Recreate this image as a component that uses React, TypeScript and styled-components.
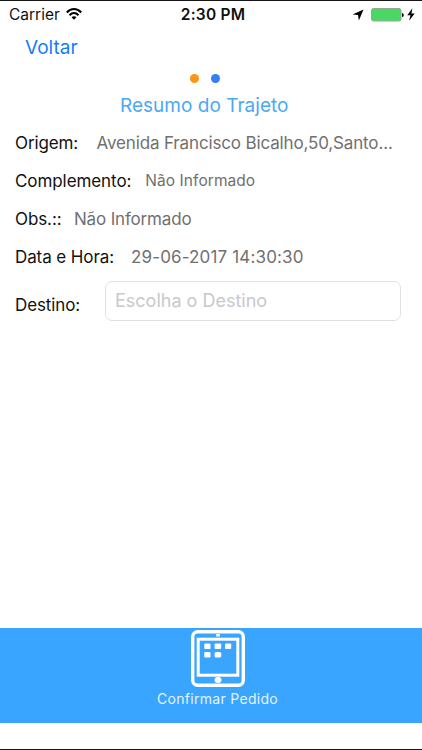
import React from "react";
import styled, { createGlobalStyle } from "styled-components";

const GlobalStyle = createGlobalStyle`
  * { box-sizing: border-box; }
  body { margin: 0; background: #fff; font-family: Inter, "Liberation Sans", sans-serif; }
`;

const Screen = styled.main`
  width: 422px;
  height: 750px;
  display: flex;
  flex-direction: column;
  overflow: hidden;
  background: #fff;
  border-top: 1px solid #151515;
  border-bottom: 1px solid #151515;
`;

const StatusBar = styled.header`
  height: 27px;
  flex: none;
  display: grid;
  grid-template-columns: 1fr auto 1fr;
  align-items: center;
  padding: 0 7px 0 9px;
  color: #111;
`;

const StatusGroup = styled.div<{ $end?: boolean }>`
  display: flex;
  align-items: center;
  justify-content: ${(p) => (p.$end ? "flex-end" : "flex-start")};
`;

const Text = styled.span<{ $size: number; $spacing?: number; $weight?: number; $color?: string }>`
  font-size: ${(p) => p.$size}px;
  letter-spacing: ${(p) => p.$spacing ?? 0}px;
  font-weight: ${(p) => p.$weight ?? 400};
  color: ${(p) => p.$color ?? "#111"};
  line-height: 24px;
  white-space: nowrap;
`;

const Clock = styled(Text)`
  padding-left: 2px;
`;

const WifiIcon = styled.svg`
  margin: 0 0 2px 6px;
`;

const BatteryIcon = styled.svg`
  margin: 0 3px 0 7px;
`;

const NavBar = styled.nav`
  height: 40px;
  flex: none;
  padding: 8px 0 0 25px;
`;

const BackButton = styled.button`
  border: 0;
  padding: 0;
  background: none;
  font-family: inherit;
  display: block;
`;

const PageDots = styled.div`
  height: 20px;
  flex: none;
  display: flex;
  justify-content: center;
  align-items: center;
  gap: 12px;
  padding-right: 12px;
`;

const Dot = styled.i<{ $color: string }>`
  width: 9px;
  height: 9px;
  border-radius: 50%;
  background: ${(p) => p.$color};
`;

const Title = styled.h1`
  margin: 6px 0 0;
  padding-left: 120px;
  height: 30px;
  flex: none;
  font: inherit;
  line-height: 24px;
`;

const Details = styled.section`
  flex: 1;
`;

const Row = styled.div<{ $gap: number }>`
  height: 38px;
  padding-left: 15px;
  display: flex;
  align-items: center;
  gap: ${(p) => p.$gap}px;
`;

const DestinationRow = styled.label`
  height: 52px;
  padding: 5px 21px 0 15px;
  display: flex;
  align-items: flex-start;
  justify-content: space-between;
`;

const DestinationLabel = styled.span`
  padding-top: 12px;
  display: flex;
`;

const DestinationInput = styled.input`
  width: 296px;
  height: 40px;
  border: 1px solid #e1e1e3;
  border-radius: 7px;
  padding: 0 9px 2px;
  outline: none;
  font-family: inherit;
  font-size: 18px;
  letter-spacing: 0;
  &::placeholder { color: #c8c8cd; opacity: 1; }
`;

const ConfirmButton = styled.button`
  height: 95px;
  flex: none;
  border: 0;
  padding: 2px 0 0 13px;
  margin-bottom: 26px;
  background: #3aa5ff;
  font-family: inherit;
  display: flex;
  flex-direction: column;
  align-items: center;
`;

const rows = [
  { label: "Origem:", value: "Avenida Francisco Bicalho,50,Santo...", gap: 18.5, size: 17, ls: -0.12, vs: -0.15 },
  { label: "Complemento:", value: "Não Informado", gap: 14, size: 15.5, ls: -0.08, vs: 0.06 },
  { label: "Obs.::", value: "Não Informado", gap: 12.5, size: 17, ls: -0.1, vs: -0.17 },
  { label: "Data e Hora:", value: "29-06-2017 14:30:30", gap: 17, size: 17, ls: -0.1, vs: 0.15 },
];

export default function App() {
  return (
    <>
      <GlobalStyle />
      <Screen>
        <StatusBar>
          <StatusGroup>
            <Text $size={15.5}>Carrier</Text>
            <WifiIcon width="16" height="12" viewBox="0 0 16 12" fill="none" stroke="#000" strokeWidth="2">
              <path d="M.8 4.5C5-.1 11-.1 15.2 4.5M3.5 7.2c2.7-2.8 6.3-2.8 9 0" />
              <path d="M8 11.8 5.5 9.2c1.5-1.3 3.5-1.3 5 0Z" fill="#000" stroke="none" />
            </WifiIcon>
          </StatusGroup>
          <Clock $size={15.5} $weight={600} $spacing={0.2}>2:30 PM</Clock>
          <StatusGroup $end>
            <svg width="12" height="12" viewBox="0 0 12 12">
              <path d="M11.5.5 6.9 11.5 6 6.1 .5 5.5Z" />
            </svg>
            <BatteryIcon width="33" height="14" viewBox="0 0 33 14">
              <rect x=".5" y=".5" width="29.5" height="12.5" rx="2" fill="#4bd763" stroke="#92a996" />
              <path d="M31 5c2.3 0 2.3 4 0 4Z" />
            </BatteryIcon>
            <svg width="8" height="13" viewBox="0 0 8 13">
              <path d="M5.3.3.3 7.2h3.2L2.1 12.7 7.7 5.5H4.5Z" />
            </svg>
          </StatusGroup>
        </StatusBar>
        <NavBar>
          <BackButton>
            <Text $size={19} $color="#187cf5">Voltar</Text>
          </BackButton>
        </NavBar>
        <PageDots>
          <Dot $color="#fd9417" />
          <Dot $color="#347ff5" />
        </PageDots>
        <Title>
          <Text $size={19} $spacing={0.02} $color="#4ba8f5">Resumo do Trajeto</Text>
        </Title>
        <Details>
          {rows.map((r) => (
            <Row key={r.label} $gap={r.gap}>
              <Text $size={17} $spacing={r.ls}>{r.label}</Text>
              <Text $size={r.size} $spacing={r.vs} $color="#707070">{r.value}</Text>
            </Row>
          ))}
          <DestinationRow>
            <DestinationLabel>
              <Text $size={17} $spacing={-0.1}>Destino:</Text>
            </DestinationLabel>
            <DestinationInput placeholder="Escolha o Destino" />
          </DestinationRow>
        </Details>
        <ConfirmButton>
          <svg width="54" height="57" viewBox="0 0 54 57" fill="none" stroke="#fff">
            <rect x="1.7" y="1.7" width="50.6" height="53.6" rx="5" strokeWidth="3.4" />
            <rect x="7.2" y="9.2" width="39.6" height="36" strokeWidth="3" />
            <g fill="#fff" stroke="none">
              <rect x="25.2" y="4" width="3.6" height="2.5" />
              <ellipse cx="27" cy="50" rx="3.5" ry="3" />
              <rect x="13.3" y="13.6" width="6.2" height="5.4" rx=".8" />
              <rect x="23.6" y="13.6" width="6.6" height="5.4" rx="1" />
              <rect x="34" y="13.6" width="6.2" height="5.4" rx=".8" />
              <rect x="13.3" y="22" width="6.2" height="5.6" rx=".8" />
              <rect x="23.6" y="22" width="6.6" height="5.6" rx="1.5" />
            </g>
          </svg>
          <Text $size={14} $spacing={0.3} $color="#e2f3ff">Confirmar Pedido</Text>
        </ConfirmButton>
      </Screen>
    </>
  );
}
